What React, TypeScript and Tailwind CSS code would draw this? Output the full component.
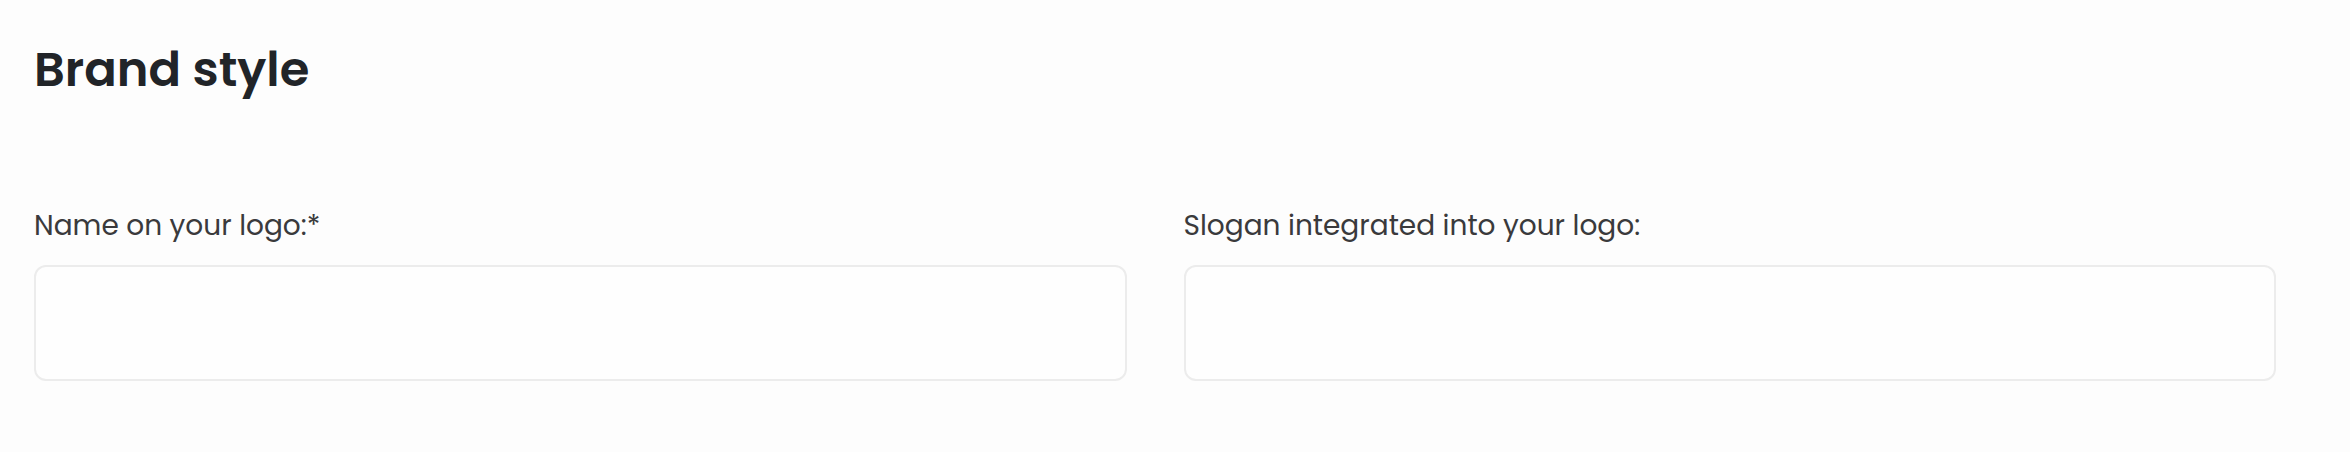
export default function App() {
  const fields = [
    { id: "name", label: "Name on your logo:*" },
    { id: "slogan", label: "Slogan integrated into your logo:" },
  ];

  return (
    <section className="w-full min-h-[452px] bg-[#fdfdfd] pl-[34px] pr-[74px] pt-[40px] font-['Poppins','Open_Sans',sans-serif]">
      {/* Header */}
      <h2 className="text-[48px] leading-[60px] font-semibold text-[#212428]">Brand style</h2>

      {/* Fields */}
      <div className="mt-[106px] grid grid-cols-2 gap-x-[57px]">
        {fields.map((field) => (
          <div key={field.id} className="flex flex-col">
            <label htmlFor={field.id} className="text-[28px] leading-[40px] text-[#3a3a3c]">
              {field.label}
            </label>
            <input
              id={field.id}
              type="text"
              className="mt-[19px] h-[116px] w-full rounded-[12px] border-2 border-[#ececec] bg-[#fefefe] px-5 outline-none"
            />
          </div>
        ))}
      </div>
    </section>
  );
}
